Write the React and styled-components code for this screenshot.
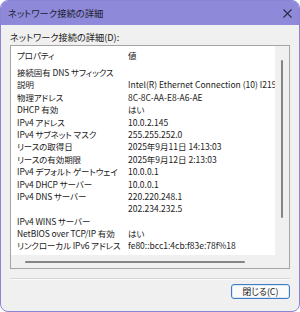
import React from "react";
import styled, { createGlobalStyle } from "styled-components";

const GlobalStyle = createGlobalStyle`
  html, body { margin: 0; padding: 0; background: #ffffff; }
  * { box-sizing: border-box; }
`;

const Window = styled.div`
  width: 300px;
  height: 312px;
  border: 1px solid #8a85d3;
  border-radius: 8px;
  background: #f0f0f0;
  overflow: hidden;
  display: flex;
  flex-direction: column;
  font-family: "Noto Sans CJK JP", "Noto Sans", sans-serif;
  font-feature-settings: "palt";
  color: #1a1a1a;
`;

const TitleBar = styled.div`
  height: 24px;
  flex: none;
  background: #8e89d8;
  display: flex;
  align-items: center;
  justify-content: space-between;
  padding: 0 7px 0 7px;
  font-size: 9.3px;
  color: #1d1d30;
`;

const Body = styled.div`
  flex: 1;
  display: flex;
  flex-direction: column;
  padding: 0 9px;
`;

const Label = styled.div`
  margin-top: 6px;
  height: 13px;
  line-height: 13px;
  font-size: 9.2px;
`;

const ListBox = styled.div`
  margin-top: 1px;
  height: 224px;
  border: 1px solid #a5a5a5;
  display: grid;
  grid-template-columns: 1fr 14px;
  grid-template-rows: 1fr 13px;
`;

const Content = styled.div`
  background: #ffffff;
  overflow: hidden;
  font-size: 8.5px;
`;

const HeaderRow = styled.div`
  display: grid;
  grid-template-columns: 117px 1fr;
  height: 18px;
  line-height: 18px;
  margin-bottom: 2px;
`;

const Row = styled.div`
  display: grid;
  grid-template-columns: 117px 1fr;
  height: 12.4px;
  line-height: 12.4px;
`;

const NameCell = styled.div`
  padding: 0 2px 0 6px;
  white-space: nowrap;
  overflow: hidden;
  text-overflow: ellipsis;
  letter-spacing: -0.1px;
`;

const ValueCell = styled.div`
  white-space: nowrap;
  overflow: hidden;
`;

const VScroll = styled.div`
  background: #f0f0f0;
  display: flex;
  flex-direction: column;
  align-items: center;
  padding-top: 14px;
`;

const VThumb = styled.div`
  width: 2px;
  height: 158px;
  border-radius: 1px;
  background: #858585;
`;

const HScroll = styled.div`
  grid-column: 1 / span 2;
  background: #f0f0f0;
  display: flex;
  align-items: center;
  padding-left: 14px;
`;

const HThumb = styled.div`
  width: 220px;
  height: 2px;
  border-radius: 1px;
  background: #858585;
`;

const Separator = styled.div`
  margin-top: 9px;
  height: 1px;
  background: #d6d6d6;
  box-shadow: 0 1px 0 #fafafa;
`;

const Footer = styled.div`
  display: flex;
  justify-content: flex-end;
  margin-top: 5px;
`;

const Button = styled.button`
  width: 59px;
  height: 15px;
  padding: 0;
  border: 1px solid #3f7cc6;
  border-radius: 3px;
  background: #fbfbfb;
  box-shadow: inset 0 0 0 1px #dbe8f6;
  font-family: "Noto Sans CJK JP", sans-serif;
  font-feature-settings: "palt";
  font-size: 8.8px;
  line-height: 13px;
  color: #1a1a1a;
`;

const CloseIcon = () => (
  <svg width="9" height="9" viewBox="0 0 9 9">
    <path d="M0.5 0.5 L8.5 8.5 M8.5 0.5 L0.5 8.5" stroke="#2a2a48" strokeWidth="1.1" fill="none" />
  </svg>
);

const rows = [
  ["接続固有 DNS サフィックス", ""],
  ["説明", "Intel(R) Ethernet Connection (10) I219-V"],
  ["物理アドレス", "8C-8C-AA-E8-A6-AE"],
  ["DHCP 有効", "はい"],
  ["IPv4 アドレス", "10.0.2.145"],
  ["IPv4 サブネット マスク", "255.255.252.0"],
  ["リースの取得日", "2025年9月11日 14:13:03"],
  ["リースの有効期限", "2025年9月12日 2:13:03"],
  ["IPv4 デフォルト ゲートウェイ", "10.0.0.1"],
  ["IPv4 DHCP サーバー", "10.0.0.1"],
  ["IPv4 DNS サーバー", "220.220.248.1"],
  ["", "202.234.232.5"],
  ["IPv4 WINS サーバー", ""],
  ["NetBIOS over TCP/IP 有効", "はい"],
  ["リンクローカル IPv6 アドレス", "fe80::bcc1:4cb:f83e:78f%18"],
];

export default function App() {
  return (
    <>
      <GlobalStyle />
      <Window>
        <TitleBar>
          <span>ネットワーク接続の詳細</span>
          <CloseIcon />
        </TitleBar>
        <Body>
          <Label>ネットワーク接続の詳細(D):</Label>
          <ListBox>
            <Content>
              <HeaderRow>
                <NameCell>プロパティ</NameCell>
                <ValueCell>値</ValueCell>
              </HeaderRow>
              {rows.map(([k, v], i) => (
                <Row key={i}>
                  <NameCell>{k}</NameCell>
                  <ValueCell>{v}</ValueCell>
                </Row>
              ))}
            </Content>
            <VScroll>
              <VThumb />
            </VScroll>
            <HScroll>
              <HThumb />
            </HScroll>
          </ListBox>
          <Separator />
          <Footer>
            <Button>閉じる(C)</Button>
          </Footer>
        </Body>
      </Window>
    </>
  );
}
